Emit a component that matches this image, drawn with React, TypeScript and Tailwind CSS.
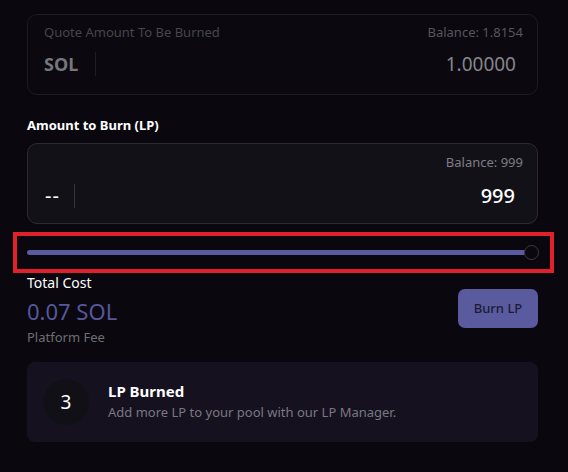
import React from "react";

export default function App() {
  return (
    <div
      className="w-[568px] h-[472px] bg-[#0a080e] overflow-hidden pl-[27px] pr-[30px] pt-[14px]"
      style={{ fontFamily: '"Noto Sans", "Open Sans", sans-serif' }}
    >
      <div className="h-[81px] rounded-[10px] border border-[#1c1a22] bg-[#0b090f] pl-[16px] pr-[14px] pt-[7px]">
        <div className="flex justify-between text-[13px] leading-[20px]">
          <span className="text-[#47454d]">Quote Amount To Be Burned</span>
          <span className="text-[#57555d]">Balance: 1.8154</span>
        </div>
        <div className="flex items-center mt-[9px] h-[26px]">
          <span className="text-[18px] font-bold text-[#77767b] leading-[26px]">SOL</span>
          <div className="ml-[17px] w-px h-[24px] bg-[#1f1d25]" />
          <span className="ml-auto mr-[7px] text-[19px] text-[#86858a] leading-[26px]">1.00000</span>
        </div>
      </div>

      <div className="mt-[21px] text-[13px] font-bold text-white leading-[18px]">Amount to Burn (LP)</div>

      <div className="mt-[9px] h-[81px] rounded-[10px] border border-[#2c2a33] bg-[#131118] px-[14px] pt-[8px]">
        <div className="flex justify-end text-[13px] leading-[20px] text-[#7e7c84]">Balance: 999</div>
        <div className="flex items-center mt-[11px] h-[26px]">
          <span className="ml-[3px] text-[20px] text-white leading-[26px] tracking-[1px]">--</span>
          <div className="ml-[14px] w-px h-[24px] bg-[#37353e]" />
          <span className="ml-auto mr-[8px] text-[20px] font-medium text-white leading-[26px]">999</span>
        </div>
      </div>

      <div className="-ml-[14px] -mr-[16px] mt-[8px] h-[41px] border-[4px] border-[#e0202b] flex items-center pl-[10px] pr-[11px]">
        <div className="flex-1 flex items-center">
          <div className="flex-1 h-[5px] rounded-full bg-[#5a5a9f]" />
          <div className="w-[15px] h-[15px] rounded-full border-[1.5px] border-[#3b3a4a] bg-[#0a080e] -ml-[2px]" />
        </div>
      </div>

      <div className="flex items-start justify-between">
        <div>
          <div className="text-[14px] text-white leading-[20px]">Total Cost</div>
          <div className="text-[22px] text-[#56579b] leading-[30px] mt-[3px]">0.07 SOL</div>
          <div className="text-[13px] text-[#6f6d75] leading-[18px] mt-[2px]">Platform Fee</div>
        </div>
        <button className="mt-[16px] w-[80px] h-[39px] rounded-[7px] bg-[#5a5a9f] text-[13px] text-[#1c1a36] font-medium">
          Burn LP
        </button>
      </div>

      <div className="mt-[16px] h-[80px] rounded-[8px] bg-[#15111f] flex items-center px-[16px]">
        <div className="w-[46px] h-[46px] rounded-full bg-[#121017] flex items-center justify-center text-[19px] text-white">
          3
        </div>
        <div className="ml-[19px] -mt-[2px]">
          <div className="text-[15px] font-bold text-white leading-[20px]">LP Burned</div>
          <div className="text-[13px] text-[#7a7882] leading-[18px] mt-[2px]">Add more LP to your pool with our LP Manager.</div>
        </div>
      </div>
    </div>
  );
}
